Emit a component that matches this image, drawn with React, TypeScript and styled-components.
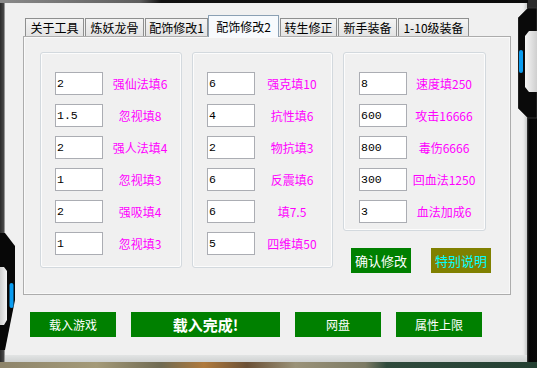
import React from 'react';
import styled, { createGlobalStyle } from 'styled-components';

const GlobalStyle = createGlobalStyle`
    html, body {
        margin: 0;
        padding: 0;
        background: #111;
    }
    body {
        font-family: "Noto Sans CJK SC", "Noto Sans", sans-serif;
    }
`;

const Screen = styled.div`
    position: relative;
    width: 537px;
    height: 368px;
    display: flex;
    flex-direction: column;
    overflow: hidden;
    background: #111;
`;

const TopStrip = styled.div`
    height: 3px;
    background: linear-gradient(90deg, #8a8a8a 0%, #5e5e5e 26%, #111 30%, #0b0b0b 100%);
`;

const Middle = styled.div`
    display: flex;
    height: 359px;
`;

const LeftEdge = styled.div`
    width: 5px;
    background: linear-gradient(90deg, #2b2b2b 0%, #474747 70%, #bdbdbd 100%);
`;

const RightEdge = styled.div`
    flex: 1;
    background: linear-gradient(90deg, #3a3a3a 0%, #060606 20%, #0a0a0a 100%);
`;

const BottomStrip = styled.div`
    height: 6px;
    background: linear-gradient(
        90deg,
        #8d846a 0%,
        #a49a78 18%,
        #6f6a52 30%,
        #b07a3c 38%,
        #6a5036 46%,
        #9a9278 55%,
        #7c7a64 68%,
        #2f4a3c 72%,
        #244032 100%
    );
`;

const Window = styled.div`
    width: 522px;
    display: flex;
    flex-direction: column;
    background: #f0f0f0;
    box-shadow: inset -4px 0 3px -2px #c9cbcb;
`;

const Body = styled.div`
    flex: 1;
    padding: 12px 0 0 18px;
`;

const Footer = styled.div`
    height: 7px;
    background: linear-gradient(#e2e4e4, #cfd2d2);
`;

const TabBar = styled.div`
    position: relative;
    z-index: 1;
    display: flex;
    align-items: flex-end;
    gap: 1px;
    height: 21px;
    padding-left: 2px;
`;

const Tab = styled.div<{ $width: number; $active?: boolean }>`
    box-sizing: border-box;
    width: ${(p) => p.$width}px;
    height: ${(p) => (p.$active ? 22 : 18)}px;
    margin-bottom: ${(p) => (p.$active ? -1 : 0)}px;
    margin-left: ${(p) => (p.$active ? -1 : 0)}px;
    display: flex;
    align-items: center;
    justify-content: center;
    border: 1px solid ${(p) => (p.$active ? '#8aa0b4' : '#8e8f8f')};
    border-bottom: none;
    background: ${(p) => (p.$active ? '#f7fafd' : 'linear-gradient(#f4f4f4, #e3e3e3)')};
    font-size: 12px;
    color: #000;
    white-space: nowrap;
`;

const Panel = styled.div`
    box-sizing: border-box;
    width: 488px;
    height: 259px;
    border: 1px solid #acacac;
    box-shadow: inset 1px 1px 0 #fafafa, inset -1px -1px 0 #f8f8f8;
    background: #f0f0f0;
    padding: 15px 0 0 16px;
    display: flex;
    align-items: flex-start;
    gap: 10px;
`;

const Group = styled.div<{ $width: number; $height: number; $inset: number }>`
    box-sizing: border-box;
    width: ${(p) => p.$width}px;
    height: ${(p) => p.$height}px;
    border: 1px solid #d3d9de;
    border-radius: 3px;
    box-shadow: inset 0 0 0 1px #fcfcfc;
    padding: 19px 0 0 ${(p) => p.$inset}px;
    display: flex;
    flex-direction: column;
    gap: 9px;
`;

const Row = styled.div`
    display: flex;
    align-items: center;
`;

const Field = styled.input`
    box-sizing: border-box;
    width: 48px;
    height: 23px;
    margin: 0;
    padding: 0 0 0 1px;
    border: 1px solid #abadb3;
    background: #fff;
    color: #000;
    font-family: "Liberation Mono", monospace;
    font-size: 11.5px;
    outline: none;
`;

const Label = styled.span`
    width: 74px;
    text-align: center;
    font-size: 12px;
    color: #ff00ff;
    white-space: nowrap;
`;

const Column = styled.div`
    display: flex;
    flex-direction: column;
    gap: 17px;
`;

const ActionRow = styled.div`
    display: flex;
    gap: 20px;
    padding-left: 8px;
`;

const ActionButton = styled.div<{ $bg: string; $fg: string }>`
    width: 60px;
    height: 25px;
    display: flex;
    align-items: center;
    justify-content: center;
    background: ${(p) => p.$bg};
    color: ${(p) => p.$fg};
    font-size: 13px;
`;

const BottomBar = styled.div`
    display: flex;
    gap: 15px;
    margin-top: 17px;
    padding-left: 7px;
`;

const BigButton = styled.div<{ $width: number; $size: number; $bold?: boolean }>`
    width: ${(p) => p.$width}px;
    height: 25px;
    display: flex;
    align-items: center;
    justify-content: center;
    background: #008000;
    color: #fff;
    font-size: ${(p) => p.$size}px;
    font-weight: ${(p) => (p.$bold ? 700 : 400)};
`;

const Ornament = styled.svg<{ $left: number; $top: number }>`
    position: absolute;
    left: ${(p) => p.$left}px;
    top: ${(p) => p.$top}px;
`;

const tabs = [
    { label: '关于工具', width: 59 },
    { label: '炼妖龙骨', width: 59 },
    { label: '配饰修改1', width: 63 },
    { label: '配饰修改2', width: 71, active: true },
    { label: '转生修正', width: 57 },
    { label: '新手装备', width: 59 },
    { label: '1-10级装备', width: 71 },
];

const groups = [
    {
        width: 142,
        height: 216,
        inset: 14,
        rows: [
            ['2', '强仙法填6'],
            ['1.5', '忽视填8'],
            ['2', '强人法填4'],
            ['1', '忽视填3'],
            ['2', '强吸填4'],
            ['1', '忽视填3'],
        ],
    },
    {
        width: 141,
        height: 216,
        inset: 14,
        rows: [
            ['6', '强克填10'],
            ['4', '抗性填6'],
            ['2', '物抗填3'],
            ['6', '反震填6'],
            ['6', '填7.5'],
            ['5', '四维填50'],
        ],
    },
];

const speedRows = [
    ['8', '速度填250'],
    ['600', '攻击16666'],
    ['800', '毒伤6666'],
    ['300', '回血法1250'],
    ['3', '血法加成6'],
];

function Fields({ rows }: { rows: string[][] }) {
    return (
        <>
            {rows.map(([value, label], i) => (
                <Row key={i}>
                    <Field value={value} readOnly />
                    <Label>{label}</Label>
                </Row>
            ))}
        </>
    );
}

export default function App() {
    return (
        <Screen>
            <GlobalStyle />
            <TopStrip />
            <Middle>
                <LeftEdge />
                <Window>
                    <Body>
                        <TabBar>
                            {tabs.map((t) => (
                                <Tab key={t.label} $width={t.width} $active={t.active}>
                                    {t.label}
                                </Tab>
                            ))}
                        </TabBar>
                        <Panel>
                            {groups.map((g, i) => (
                                <Group key={i} $width={g.width} $height={g.height} $inset={g.inset}>
                                    <Fields rows={g.rows} />
                                </Group>
                            ))}
                            <Column>
                                <Group $width={143} $height={179} $inset={15}>
                                    <Fields rows={speedRows} />
                                </Group>
                                <ActionRow>
                                    <ActionButton $bg="#008000" $fg="#ffffff">
                                        确认修改
                                    </ActionButton>
                                    <ActionButton $bg="#808000" $fg="#00ffff">
                                        特别说明
                                    </ActionButton>
                                </ActionRow>
                            </Column>
                        </Panel>
                        <BottomBar>
                            <BigButton $width={86} $size={12}>
                                载入游戏
                            </BigButton>
                            <BigButton $width={149} $size={15} $bold>
                                载入完成!
                            </BigButton>
                            <BigButton $width={86} $size={12}>
                                网盘
                            </BigButton>
                            <BigButton $width={86} $size={12}>
                                属性上限
                            </BigButton>
                        </BottomBar>
                    </Body>
                    <Footer />
                </Window>
                <RightEdge />
            </Middle>
            <BottomStrip />

            {/* frame decorations over the window edges */}
            <Ornament $left={0} $top={230} width={16} height={122} viewBox="0 0 16 122">
                <defs>
                    <linearGradient id="lw" x1="0" y1="0" x2="1" y2="0">
                        <stop offset="0" stopColor="#cfcfcf" />
                        <stop offset="1" stopColor="#f4f4f4" />
                    </linearGradient>
                </defs>
                <polygon points="0,3 5,3 15,16 15,70 5,120 0,120" fill="#070707" />
                <polygon points="0,37 4,37 7,41 7,90 4,95 0,95" fill="url(#lw)" />
                <rect x={9.5} y={53} width={4} height={25} rx={2} fill="#0a9cf0" />
            </Ornament>
            <Ornament $left={518} $top={0} width={19} height={120} viewBox="0 0 19 120">
                <defs>
                    <linearGradient id="rw" x1="0" y1="0" x2="1" y2="0">
                        <stop offset="0" stopColor="#f6f6f6" />
                        <stop offset="1" stopColor="#cfcfcf" />
                    </linearGradient>
                </defs>
                <rect x={10} y={0} width={9} height={10} fill="#2c2c2c" />
                <polygon points="10,8 19,8 19,118 10,118 0,108 0,18" fill="#0a0a0a" stroke="#3c3c3c" strokeWidth={0.8} />
                <polygon points="7,36 11,31 19,31 19,92 11,92 7,87" fill="url(#rw)" />
                <rect x={1} y={50} width={4} height={23} rx={2} fill="#0a9cf0" />
            </Ornament>
        </Screen>
    );
}
